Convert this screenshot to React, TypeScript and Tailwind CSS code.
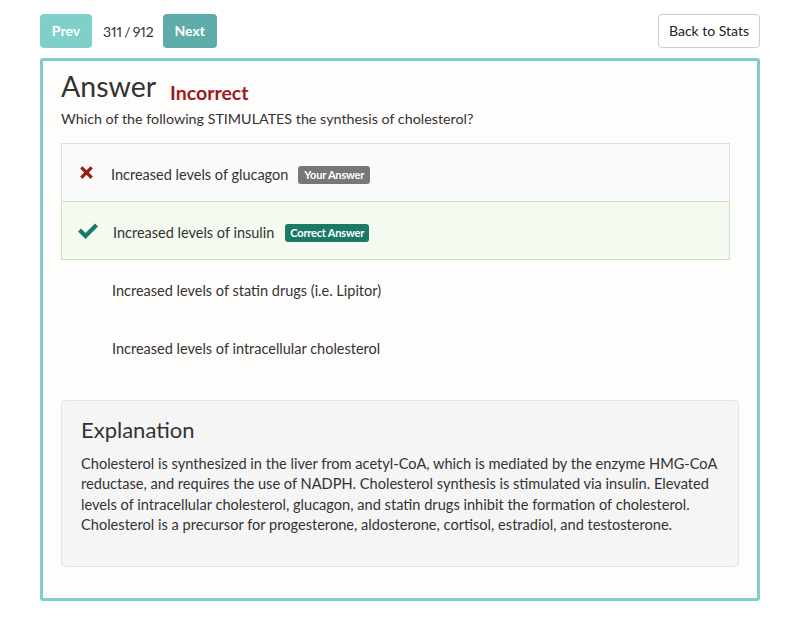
import React from "react";

const options = [
  { text: "Increased levels of glucagon", state: "wrong" },
  { text: "Increased levels of insulin", state: "correct" },
  { text: "Increased levels of statin drugs (i.e. Lipitor)", state: "none" },
  { text: "Increased levels of intracellular cholesterol", state: "none" },
];

function CrossIcon() {
  return (
    <svg width="17" height="17" viewBox="0 0 16 16">
      <path
        d="M2 4.2L4.2 2L8 5.8L11.8 2L14 4.2L10.2 8L14 11.8L11.8 14L8 10.2L4.2 14L2 11.8L5.8 8Z"
        fill="#9c1c1c"
      />
    </svg>
  );
}

function CheckIcon() {
  return (
    <svg width="22" height="18" viewBox="0 0 22 18">
      <path d="M1 9.5L4 6.5L8.5 11L18 1.5L21 4.5L8.5 17Z" fill="#1b7a69" />
    </svg>
  );
}

export default function App() {
  return (
    <div className="min-h-[624px] bg-white font-['Lato',sans-serif] text-[#333]">
      <div className="flex items-center justify-between px-10 pt-[14px]">
        <div className="flex items-center">
          <button className="h-[34px] w-[52px] rounded-[4px] bg-[#7fcfcb] pb-[2px] text-[14px] font-bold text-white">
            Prev
          </button>
          <span className="ml-[11px] mr-[9px] text-[14px] proportional-nums [word-spacing:-1.5px]">
            311 / 912
          </span>
          <button className="h-[34px] w-[54px] rounded-[4px] bg-[#5fadaa] pb-[2px] text-[14px] font-bold text-white">
            Next
          </button>
        </div>
        <button className="h-[34px] w-[102px] rounded-[4px] border border-[#ccc] bg-white pb-[1px] text-[14px] text-[#222]">
          Back to Stats
        </button>
      </div>

      <div className="mx-10 mt-[10px] rounded-[3px] border-[3px] border-[#7ecfcc] bg-[#fffdfb] px-[18px] pb-[31px] pt-[7px]">
        <div className="flex items-end">
          <h1 className="text-[28.5px] leading-[36px] text-[#333]">Answer</h1>
          <span className="mb-[-4px] ml-[14px] text-[19.5px] font-bold leading-[30px] text-[#9b1b1b]">
            Incorrect
          </span>
        </div>
        <p className="mt-[5px] text-[14.3px] leading-[20px]">
          Which of the following STIMULATES the synthesis of cholesterol?
        </p>

        <div className="mr-[9px] mt-[14px]">
          {options.map((o) => (
            <div
              key={o.text}
              className={
                o.state === "wrong"
                  ? "flex h-[59px] items-center border border-[#ddd] bg-[#fafafa] pl-[15px] pr-4 pt-[5px]"
                  : o.state === "correct"
                    ? "-mt-px flex h-[59px] items-center border border-[#c8e5c0] bg-[#f4faf0] pl-[15px] pr-4 pt-[5px]"
                    : "flex h-[58px] items-center pl-[51px] pr-4 pt-[4px]"
              }
            >
              {o.state === "wrong" && (
                <span className="mr-[16px] ml-[1px] -mt-[5px] flex w-[17px] justify-center">
                  <CrossIcon />
                </span>
              )}
              {o.state === "correct" && (
                <span className="mr-[14px] -mt-[5px] flex w-[22px] justify-center">
                  <CheckIcon />
                </span>
              )}
              <span className="text-[14.5px]">{o.text}</span>
              {o.state === "wrong" && (
                <span className="ml-[10px] rounded-[3px] bg-[#777] px-[6px] py-[2px] text-[11px] font-bold leading-[14px] tracking-[-0.2px] text-white">
                  Your Answer
                </span>
              )}
              {o.state === "correct" && (
                <span className="ml-[11px] rounded-[3px] bg-[#1a7a66] px-[5px] py-[2px] text-[11px] font-bold leading-[14px] tracking-[-0.2px] text-white">
                  Correct Answer
                </span>
              )}
            </div>
          ))}
        </div>

        <div className="mt-[24px] min-h-[167px] rounded-[4px] border border-[#e3e3e3] bg-[#f5f5f5] pb-6 pl-[19px] pr-[12px] pt-[15px]">
          <h2 className="text-[22px] leading-[28px] text-[#333]">Explanation</h2>
          <p className="mt-[10px] text-[14.6px] leading-[20.4px]">
            Cholesterol is synthesized in the liver from acetyl-CoA, which is mediated by the
            enzyme HMG-CoA reductase, and requires the use of NADPH. Cholesterol synthesis is
            stimulated via insulin. Elevated levels of intracellular cholesterol, glucagon, and
            statin drugs inhibit the formation of cholesterol. Cholesterol is a precursor for
            progesterone, aldosterone, cortisol, estradiol, and testosterone.
          </p>
        </div>
      </div>
    </div>
  );
}
